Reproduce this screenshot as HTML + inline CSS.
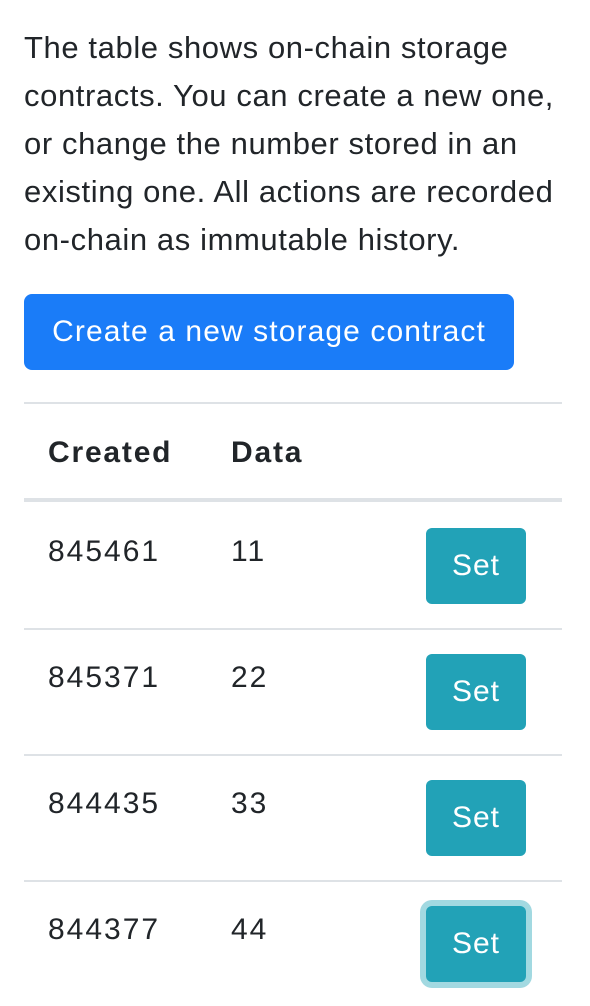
<!DOCTYPE html>
<html><head><style>
body{margin:0;width:590px;height:1006px;overflow:hidden;background:#fff;font-family:"Liberation Sans",Arial,sans-serif;color:#212529;position:relative}
p{position:absolute;left:24px;top:24px;margin:0;font-size:31px;line-height:48px;width:570px;letter-spacing:0.6px;white-space:nowrap}
.btn{position:absolute;left:24px;top:294px;width:490px;height:76px;background:#1a7cf8;color:#fff;border-radius:8px;font-size:30px;letter-spacing:1.1px;line-height:76px;text-align:center}
.hl{position:absolute;left:24px;width:538px;background:#dee2e6}
.t{position:absolute;font-size:30px;line-height:32px;letter-spacing:2px}
.th{font-weight:bold;letter-spacing:1.8px}
.set{position:absolute;left:426px;width:100px;height:76px;background:#22a2b7;color:#fff;border-radius:6px;font-size:30px;letter-spacing:1px;line-height:76px;text-align:center}
</style></head><body>
<p>The table shows on-chain storage<br>contracts. You can create a new one,<br>or change the number stored in an<br>existing one. All actions are recorded<br>on-chain as immutable history.</p>
<div class="btn">Create a new storage contract</div>
<div class="hl" style="top:402px;height:2px"></div>
<div class="t th" style="left:48px;top:437px">Created</div>
<div class="t th" style="left:231px;top:437px">Data</div>
<div class="hl" style="top:498px;height:4px"></div>

<div class="t" style="left:48px;top:536px">845461</div><div class="t" style="left:231px;top:536px">11</div>
<div class="set" style="top:528px">Set</div>
<div class="hl" style="top:628px;height:2px"></div>

<div class="t" style="left:48px;top:662px">845371</div><div class="t" style="left:231px;top:662px">22</div>
<div class="set" style="top:654px">Set</div>
<div class="hl" style="top:754px;height:2px"></div>

<div class="t" style="left:48px;top:788px">844435</div><div class="t" style="left:231px;top:788px">33</div>
<div class="set" style="top:780px">Set</div>
<div class="hl" style="top:880px;height:2px"></div>

<div class="t" style="left:48px;top:914px">844377</div><div class="t" style="left:231px;top:914px">44</div>
<div class="set" style="top:906px;box-shadow:0 0 0 6px #a2d9e1">Set</div>
</body></html>
